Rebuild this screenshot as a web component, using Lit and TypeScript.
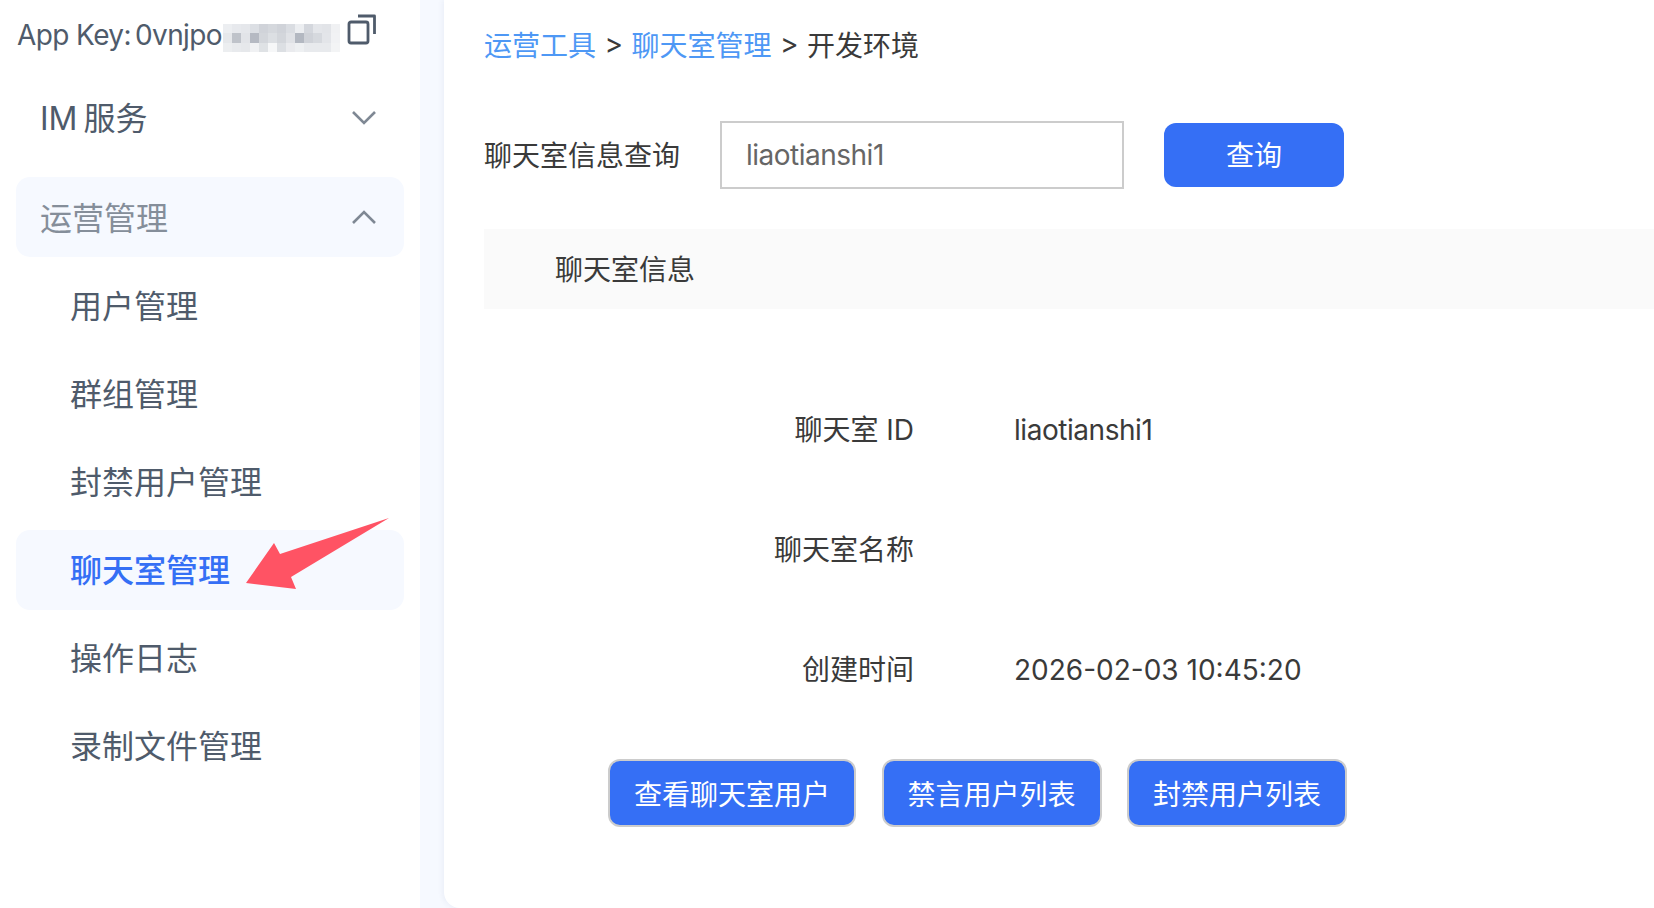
import { LitElement, html, css, svg } from "lit";
import { customElement } from "lit/decorators.js";
import { styleMap } from "lit/directives/style-map.js";

const MOSAIC = [
  ["#eceef1","#e7e9ed","#e5e7eb","#dcdfe4","#d0d3d9","#d5d8dd","#d0d3d9","#dadde2","#eceef1","#d4d7dd","#e4e6ea","#e2e4e8","#f0f1f3"],
  ["#e6e8eb","#bfc3ca","#e2e4e8","#b5b9c2","#d3d6db","#dcdfe3","#d3d6db","#e0e2e6","#b3b8c1","#cfd2d8","#d6d9de","#e3e5e9","#f1f2f4"],
  ["#eceef0","#e8eaed","#e6e8eb","#f0f1f3","#dfe2e5","#f6f7f8","#dcdfe3","#eaebee","#eef0f2","#e8eaed","#e8eaed","#e8eaed","#f3f4f5"],
];

@customElement("app-root")
export class AppRoot extends LitElement {
  static styles = css`
    :host {
      display: block;
      width: 1654px;
      height: 908px;
      overflow: hidden;
      background: #f6f9ff;
      font-family: Inter, "Noto Sans CJK SC", sans-serif;
    }
    .page {
      position: relative;
      display: grid;
      grid-template-columns: 420px 1fr;
      column-gap: 24px;
      height: 908px;
    }
    .side {
      background: #fff;
      padding: 0 16px;
      box-sizing: border-box;
      color: #4f5b6b;
    }
    .key {
      display: flex;
      align-items: center;
      height: 68px;
      font-size: 28px;
      letter-spacing: -0.6px;
      padding-left: 1px;
    }
    .key-text { padding-top: 2px; }
    .key-label { margin-right: 4px; }
    .mosaic {
      display: grid;
      grid-template-columns: repeat(13, 9px);
      grid-auto-rows: 9.33px;
      margin-left: 1px;
      margin-top: 8px;
    }
    .copy { margin-left: 7px; margin-top: -8px; flex: none; display: block; }
    .group {
      display: flex;
      align-items: center;
      justify-content: space-between;
      height: 80px;
      padding: 0 27px 0 25px;
      font-size: 32px;
      margin-top: 10px;
      border-radius: 14px;
    }
    .group-text { position: relative; top: -2px; word-spacing: -3px; left: -1px; }
    .group.open {
      margin-top: 19px;
      background: #f6f9ff;
      color: #858e9a;
    }
    .group.open .group-text { top: -1px; }
    .subs {
      list-style: none;
      margin: 9px 0 0;
      padding: 0;
      display: flex;
      flex-direction: column;
      gap: 8px;
    }
    .subs li {
      height: 80px;
      line-height: 82px;
      padding-left: 54px;
      font-size: 32px;
      border-radius: 14px;
    }
    .subs li.active {
      background: #f6f9ff;
      color: #356ff5;
      font-weight: 500;
    }
    .main {
      background: #fff;
      border-bottom-left-radius: 16px;
      box-shadow: -2px 0 5px rgba(60, 80, 130, 0.06);
      padding: 0 0 0 40px;
      font-size: 28px;
      color: #3a3a3a;
    }
    .crumbs {
      display: flex;
      gap: 8.5px;
      height: 88px;
      align-items: center;
    }
    .crumbs a { color: #4e98f5; }
    .query {
      display: flex;
      align-items: center;
      margin-top: 33px;
      height: 68px;
    }
    .query label { width: 236px; flex: none; position: relative; top: -1px; }
    .input {
      width: 404px;
      height: 68px;
      box-sizing: border-box;
      border: 2px solid #ccc;
      padding: 0 24px;
      line-height: 64px;
      letter-spacing: -0.5px;
      color: #666;
      flex: none;
    }
    .btn {
      box-sizing: border-box;
      display: flex;
      align-items: center;
      justify-content: center;
      background: #356ff5;
      color: #fff;
      font-size: 28px;
      border-radius: 12px;
    }
    .btn.search {
      width: 180px;
      height: 64px;
      margin-left: 40px;
      padding-bottom: 2px;
    }
    .band {
      margin-top: 40px;
      height: 80px;
      line-height: 82px;
      background: #fafafa;
      padding-left: 71px;
    }
    .rows { margin-top: 61px; }
    .row {
      display: grid;
      grid-template-columns: 430px 1fr;
      column-gap: 100px;
      height: 120px;
      line-height: 120px;
    }
    .row .lbl { text-align: right; }
    .latin { letter-spacing: -0.45px; }
    .actions {
      display: flex;
      gap: 25.5px;
      margin: 29px 0 0 124px;
    }
    .actions .btn {
      height: 68px;
      padding: 0 24px;
      border: 2px solid #ccc;
    }
    .arrow { position: absolute; left: 240px; top: 510px; pointer-events: none; }
  `;

  private chevron(up: boolean) {
    return html`<svg width="26" height="16" viewBox="0 0 26 16" fill="none" stroke="#7f8894" stroke-width="2.6">
      ${up ? svg`<path d="M2 14 L13 3 L24 14"/>` : svg`<path d="M2 2 L13 13 L24 2"/>`}
    </svg>`;
  }

  render() {
    const subs = ["用户管理", "群组管理", "封禁用户管理", "聊天室管理", "操作日志", "录制文件管理"];
    return html`
      <div class="page">
        <aside class="side">
          <div class="key">
            <span class="key-text key-label">App Key:</span><span class="key-text">0vnjpo</span>
            <span class="mosaic" aria-hidden="true">
              ${MOSAIC.flat().map((c) => html`<span style=${styleMap({ background: c })}></span>`)}
            </span>
            <svg class="copy" width="30" height="32" viewBox="0 0 30 32" fill="none" stroke="#4f5b6b" stroke-width="2.8" stroke-linejoin="round">
              <rect x="2" y="8" width="19" height="21" rx="2"/>
              <path d="M11 2 H27.5 V20"/>
            </svg>
          </div>
          <div class="group"><span class="group-text">IM 服务</span> ${this.chevron(false)}</div>
          <div class="group open"><span class="group-text">运营管理</span> ${this.chevron(true)}</div>
          <ul class="subs">
            ${subs.map((s) => html`<li class=${s === "聊天室管理" ? "active" : ""}>${s}</li>`)}
          </ul>
        </aside>
        <main class="main">
          <div class="crumbs">
            <a>运营工具</a><span>&gt;</span><a>聊天室管理</a><span>&gt;</span><span>开发环境</span>
          </div>
          <div class="query">
            <label>聊天室信息查询</label>
            <div class="input">liaotianshi1</div>
            <div class="btn search">查询</div>
          </div>
          <div class="band">聊天室信息</div>
          <div class="rows">
            <div class="row"><span class="lbl">聊天室 ID</span><span class="latin">liaotianshi1</span></div>
            <div class="row"><span class="lbl">聊天室名称</span><span></span></div>
            <div class="row"><span class="lbl">创建时间</span><span>2026-02-03 10:45:20</span></div>
          </div>
          <div class="actions">
            <div class="btn">查看聊天室用户</div>
            <div class="btn">禁言用户列表</div>
            <div class="btn">封禁用户列表</div>
          </div>
        </main>
        <svg class="arrow" width="156" height="86" viewBox="240 510 156 86">
          <polygon fill="#ff5364" points="389,518 280,554 274,543 246,583 296,589 291,577"/>
        </svg>
      </div>
    `;
  }
}
